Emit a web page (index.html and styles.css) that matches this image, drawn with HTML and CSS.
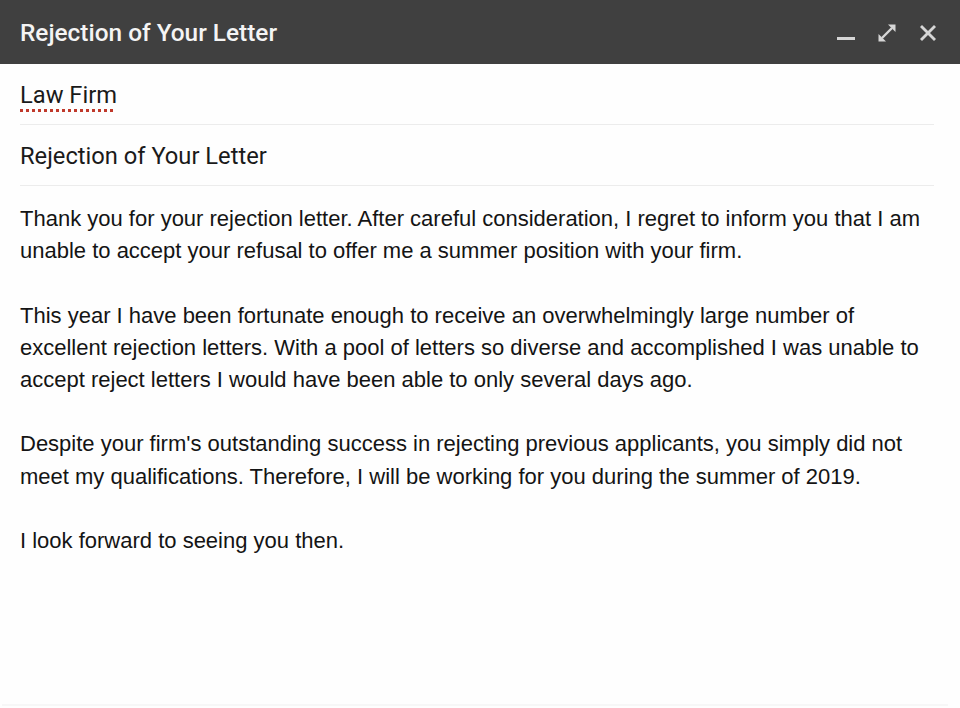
FILE: index.html
```html
<!DOCTYPE html>
<html>
<head>
<meta charset="utf-8">
<link rel="stylesheet" href="styles.css">
</head>
<body>
<div class="window">
  <header class="titlebar">
    <span class="title">Rejection of Your Letter</span>
    <div class="controls">
      <svg class="icon" width="20" height="20" viewBox="0 0 20 20"><rect x="1" y="14" width="18" height="3" fill="#d6d6d6"/></svg>
      <svg class="icon" width="20" height="20" viewBox="0 0 20 20"><g fill="none" stroke="#d6d6d6" stroke-width="2.4"><line x1="5" y1="15" x2="15" y2="5"/></g><polygon points="11,1.5 18.5,1.5 18.5,9" fill="#d6d6d6"/><polygon points="1.5,11 1.5,18.5 9,18.5" fill="#d6d6d6"/></svg>
      <svg class="icon" width="20" height="20" viewBox="0 0 20 20"><g stroke="#d6d6d6" stroke-width="2.8"><line x1="3" y1="3" x2="17" y2="17"/><line x1="17" y1="3" x2="3" y2="17"/></g></svg>
    </div>
  </header>
  <div class="content">
    <div class="field"><span class="misspelled">Law Firm</span></div>
    <div class="field">Rejection of Your Letter</div>
    <div class="body">
      Thank you for your rejection letter. After careful consideration, I regret to inform you that I am unable to accept your refusal to offer me a summer position with your firm.<br><br>
      This year I have been fortunate enough to receive an overwhelmingly large number of excellent rejection letters. With a pool of letters so diverse and accomplished I was unable to accept reject letters I would have been able to only several days ago.<br><br>
      Despite your firm's outstanding success in rejecting previous applicants, you simply did not meet my qualifications. Therefore, I will be working for you during the summer of 2019.<br><br>
      I look forward to seeing you then.
    </div>
  </div>
  <div class="footer-line"></div>
</div>
</body>
</html>
```
FILE: styles.css
```css
html, body {
  margin: 0;
  padding: 0;
  background: #fefefe;
}
.window {
  width: 960px;
  height: 708px;
  display: flex;
  flex-direction: column;
  background: #fefefe;
}
.titlebar {
  height: 64px;
  flex: none;
  background: #404040;
  display: flex;
  align-items: center;
  justify-content: space-between;
  padding: 0 22px 0 20px;
  box-sizing: border-box;
}
.title {
  font-family: Roboto, "Liberation Sans", sans-serif;
  font-weight: 500;
  font-size: 24.4px;
  color: #f4f4f4;
  padding-top: 1px;
}
.controls {
  display: flex;
  gap: 21px;
  align-items: center;
  padding-top: 2px;
}
.icon { display: block; }
.content {
  flex: 1;
  padding: 0 26px 0 20px;
}
.field {
  font-family: Roboto, "Liberation Sans", sans-serif;
  font-size: 23.7px;
  color: #1a1a1a;
  height: 61px;
  line-height: 62px;
  border-bottom: 1.5px solid #ececec;
  box-sizing: border-box;
}
.misspelled {
  text-decoration: underline dotted #c0392b;
  text-decoration-thickness: 3px;
  text-underline-offset: 6px;
}
.body {
  font-family: "Liberation Sans", Arial, sans-serif;
  font-size: 22px;
  line-height: 32.2px;
  color: #141414;
  padding-top: 17px;
}
.footer-line {
  height: 2px;
  margin: 0 12px 2px 2px;
  background: #f7f7f7;
}
```
